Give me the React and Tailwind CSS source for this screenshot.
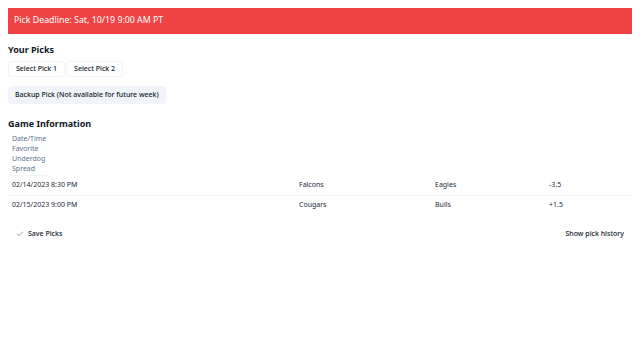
import React from 'react';

const games = [
    { id: 1, fecha: '02/14/2023 8:30 PM', favorito: 'Falcons', underdog: 'Eagles', spread: '-3.5' },
    { id: 2, fecha: '02/15/2023 9:00 PM', favorito: 'Cougars', underdog: 'Bulls', spread: '+1.5' },
];

const CheckIcon = () => (
    <svg width="8" height="8" viewBox="0 0 24 24" fill="none" stroke="currentColor" strokeWidth="2" strokeLinecap="round" strokeLinejoin="round">
        <path d="M20 6 9 17l-5-5" />
    </svg>
);

const App = () => {
    return (
        <div className="p-2 bg-white min-h-[360px] text-gray-900" style={{ fontFamily: '"Noto Sans", sans-serif' }}>
            <div className="h-[26px] bg-[#ef4444] px-1.5 flex items-center text-white text-[8.8px]">
                Pick Deadline: Sat, 10/19 9:00 AM PT
            </div>

            <h2 className="mt-[10px] text-[9px] leading-3 font-bold">Your Picks</h2>
            <div className="mt-[5px] flex gap-px">
                <button className="h-4 px-[7px] text-[7px] font-medium bg-white border border-gray-100 rounded shadow-[0_0_1px_rgba(0,0,0,0.05)]">Select Pick 1</button>
                <button className="h-4 px-[7px] text-[7px] font-medium bg-white border border-gray-100 rounded shadow-[0_0_1px_rgba(0,0,0,0.05)]">Select Pick 2</button>
            </div>
            <button className="mt-[9px] h-[18px] px-[7px] text-[7px] font-medium bg-slate-100 rounded">
                Backup Pick (Not available for future week)
            </button>

            <h2 className="mt-[14px] text-[9px] leading-3 font-bold">Game Information</h2>
            <div className="mt-1">
                <div className="w-10 px-1 pb-px border-b border-gray-100 text-[7px] leading-[10px] text-slate-500">
                    <div>Date/Time</div>
                    <div>Favorite</div>
                    <div>Underdog</div>
                    <div>Spread</div>
                </div>
                {games.map((g, i) => (
                    <div key={g.id} className={`grid grid-cols-[287px_136px_114px_1fr] h-[19px] items-center text-[7px] text-gray-800 ${i === 0 ? 'border-b border-gray-100 h-[20px]' : ''}`}>
                        <div className="px-1">{g.fecha}</div>
                        <div className="px-1">{g.favorito}</div>
                        <div className="px-1">{g.underdog}</div>
                        <div className="px-1">{g.spread}</div>
                    </div>
                ))}
            </div>

            <div className="mt-[14px] flex items-center justify-between px-2 text-[7px] font-medium">
                <button className="flex items-center gap-1">
                    <span className="text-gray-500"><CheckIcon /></span>
                    Save Picks
                </button>
                <button>Show pick history</button>
            </div>
        </div>
    );
};

export default App;
